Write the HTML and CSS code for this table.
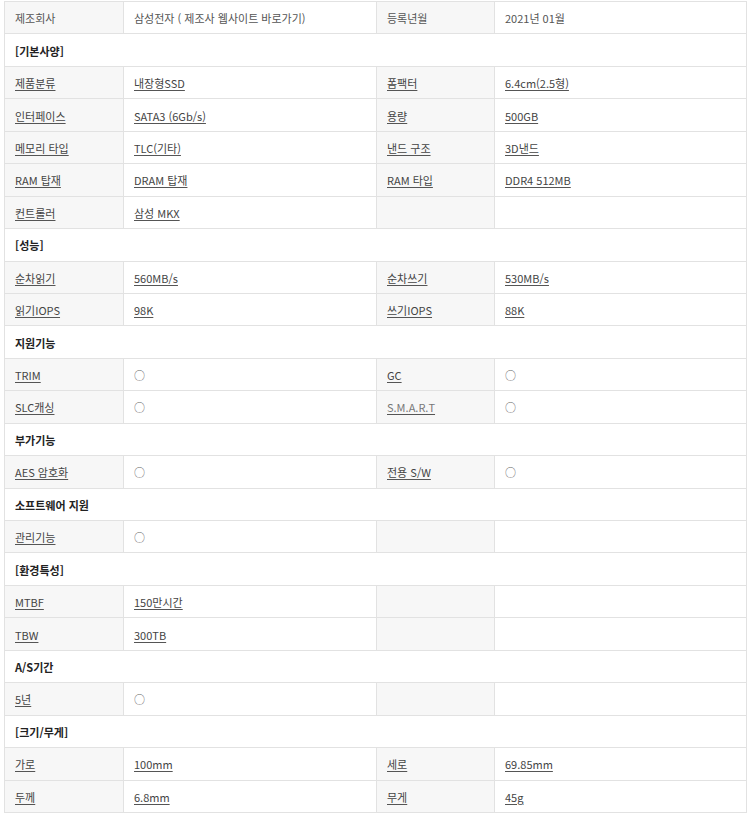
FILE: index.html
```html
<!DOCTYPE html>
<html lang="ko">
<head>
<meta charset="utf-8">
<title>제품 사양</title>
<link rel="stylesheet" href="styles.css">
</head>
<body>
<table class="spec">
  <colgroup>
    <col class="c-label">
    <col class="c-value">
    <col class="c-label2">
    <col class="c-value2">
  </colgroup>
  <tbody>
    <tr>
      <th class="lbl plain">제조회사</th>
      <td class="val plain">삼성전자 ( 제조사 웹사이트 바로가기)</td>
      <th class="lbl plain">등록년월</th>
      <td class="val plain">2021년 01월</td>
    </tr>
    <tr class="section"><th colspan="4">[기본사양]</th></tr>
    <tr>
      <th class="lbl"><a>제품분류</a></th>
      <td class="val"><a>내장형SSD</a></td>
      <th class="lbl"><a>폼팩터</a></th>
      <td class="val"><a>6.4cm(2.5형)</a></td>
    </tr>
    <tr>
      <th class="lbl"><a>인터페이스</a></th>
      <td class="val"><a>SATA3 (6Gb/s)</a></td>
      <th class="lbl"><a>용량</a></th>
      <td class="val"><a>500GB</a></td>
    </tr>
    <tr>
      <th class="lbl"><a>메모리 타입</a></th>
      <td class="val"><a>TLC(기타)</a></td>
      <th class="lbl"><a>낸드 구조</a></th>
      <td class="val"><a>3D낸드</a></td>
    </tr>
    <tr>
      <th class="lbl"><a>RAM 탑재</a></th>
      <td class="val"><a>DRAM 탑재</a></td>
      <th class="lbl"><a>RAM 타입</a></th>
      <td class="val"><a>DDR4 512MB</a></td>
    </tr>
    <tr>
      <th class="lbl"><a>컨트롤러</a></th>
      <td class="val"><a>삼성 MKX</a></td>
      <th class="lbl"></th>
      <td class="val"></td>
    </tr>
    <tr class="section"><th colspan="4">[성능]</th></tr>
    <tr>
      <th class="lbl"><a>순차읽기</a></th>
      <td class="val"><a>560MB/s</a></td>
      <th class="lbl"><a>순차쓰기</a></th>
      <td class="val"><a>530MB/s</a></td>
    </tr>
    <tr>
      <th class="lbl"><a>읽기IOPS</a></th>
      <td class="val"><a>98K</a></td>
      <th class="lbl"><a>쓰기IOPS</a></th>
      <td class="val"><a>88K</a></td>
    </tr>
    <tr class="section"><th colspan="4">지원기능</th></tr>
    <tr>
      <th class="lbl"><a>TRIM</a></th>
      <td class="val"><span class="mark">○</span></td>
      <th class="lbl"><a>GC</a></th>
      <td class="val"><span class="mark">○</span></td>
    </tr>
    <tr>
      <th class="lbl"><a>SLC캐싱</a></th>
      <td class="val"><span class="mark">○</span></td>
      <th class="lbl"><a class="faded">S.M.A.R.T</a></th>
      <td class="val"><span class="mark">○</span></td>
    </tr>
    <tr class="section"><th colspan="4">부가기능</th></tr>
    <tr>
      <th class="lbl"><a>AES 암호화</a></th>
      <td class="val"><span class="mark">○</span></td>
      <th class="lbl"><a>전용 S/W</a></th>
      <td class="val"><span class="mark">○</span></td>
    </tr>
    <tr class="section"><th colspan="4">소프트웨어 지원</th></tr>
    <tr>
      <th class="lbl"><a>관리기능</a></th>
      <td class="val"><span class="mark">○</span></td>
      <th class="lbl"></th>
      <td class="val"></td>
    </tr>
    <tr class="section"><th colspan="4">[환경특성]</th></tr>
    <tr>
      <th class="lbl"><a>MTBF</a></th>
      <td class="val"><a>150만시간</a></td>
      <th class="lbl"></th>
      <td class="val"></td>
    </tr>
    <tr>
      <th class="lbl"><a>TBW</a></th>
      <td class="val"><a>300TB</a></td>
      <th class="lbl"></th>
      <td class="val"></td>
    </tr>
    <tr class="section"><th colspan="4">A/S기간</th></tr>
    <tr>
      <th class="lbl"><a>5년</a></th>
      <td class="val"><span class="mark">○</span></td>
      <th class="lbl"></th>
      <td class="val"></td>
    </tr>
    <tr class="section"><th colspan="4">[크기/무게]</th></tr>
    <tr>
      <th class="lbl"><a>가로</a></th>
      <td class="val"><a>100mm</a></td>
      <th class="lbl"><a>세로</a></th>
      <td class="val"><a>69.85mm</a></td>
    </tr>
    <tr>
      <th class="lbl"><a>두께</a></th>
      <td class="val"><a>6.8mm</a></td>
      <th class="lbl"><a>무게</a></th>
      <td class="val"><a>45g</a></td>
    </tr>
  </tbody>
</table>
</body>
</html>
```
FILE: styles.css
```css
html, body {
  margin: 0;
  padding: 0;
  background: #ffffff;
}

body {
  padding: 1px 0 0 4px;
  font-family: "Noto Sans CJK KR", "Noto Sans", sans-serif;
  font-size: 11px;
  color: #333333;
}

.spec {
  width: 742px;
  table-layout: fixed;
  border-collapse: collapse;
  border: 1px solid #e2e2e2;
}

.c-label { width: 119px; }
.c-value { width: 253px; }
.c-label2 { width: 118px; }
.c-value2 { width: 252px; }

.spec th,
.spec td {
  height: 32.45px;
  padding: 1px 10px 0 10px;
  border: 1px solid #e2e2e2;
  text-align: left;
  vertical-align: middle;
  font-weight: normal;
  line-height: 14px;
  white-space: nowrap;
  box-sizing: border-box;
}

.spec .lbl {
  background: #f7f7f7;
}

.spec .val {
  background: #ffffff;
}

.spec a {
  color: #444444;
  text-decoration: underline;
  text-decoration-color: #555555;
  text-underline-offset: 2px;
}

.spec a.faded {
  color: #777777;
}

.spec .plain {
  color: #555555;
}

.section th {
  background: #ffffff;
  font-weight: bold;
  color: #222222;
}

.mark {
  color: #666666;
  font-size: 11px;
}
```
